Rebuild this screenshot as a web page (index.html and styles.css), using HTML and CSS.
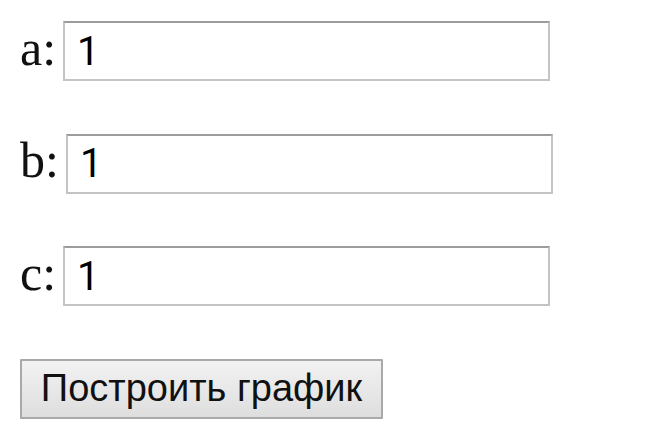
FILE: index.html
```html
<!DOCTYPE html>
<html lang="ru">
<head>
<meta charset="utf-8">
<title>График</title>
<link rel="stylesheet" href="styles.css">
</head>
<body>
<form class="form">
  <div class="row"><label class="label" for="a">a:</label><input class="field" id="a" type="text" value="1"></div>
  <div class="row"><label class="label" for="b">b:</label><input class="field" id="b" type="text" value="1"></div>
  <div class="row"><label class="label" for="c">c:</label><input class="field" id="c" type="text" value="1"></div>
  <div class="row"><button class="btn" type="button">Построить график</button></div>
</form>
</body>
</html>
```
FILE: styles.css
```css
html, body {
  margin: 0;
  padding: 0;
  background: #ffffff;
}
.form {
  display: flex;
  flex-direction: column;
  gap: 52.5px;
  padding: 21px 0 0 20px;
}
.row {
  display: flex;
  align-items: baseline;
  gap: 7px;
  height: 60px;
}
.label {
  font-family: "Liberation Serif", "Times New Roman", serif;
  font-size: 50px;
  color: #111;
  line-height: 1;
}
.field {
  box-sizing: border-box;
  width: 487px;
  height: 60px;
  margin: 0;
  padding: 0 12px;
  border: 2px solid #c4c4c4;
  border-top-color: #9c9c9c;
  font: 40px Roboto, "Liberation Sans", Arial, sans-serif;
  color: #000;
  background: #fff;
  outline: none;
}
.btn {
  box-sizing: border-box;
  height: 60px;
  width: 363px;
  margin: 0;
  padding: 0;
  border: 2px solid #a9a9a9;
  border-radius: 1px;
  background: linear-gradient(#f2f2f2, #dedede);
  font: 38px "Liberation Sans", Arial, sans-serif;
  color: #111;
}
```
